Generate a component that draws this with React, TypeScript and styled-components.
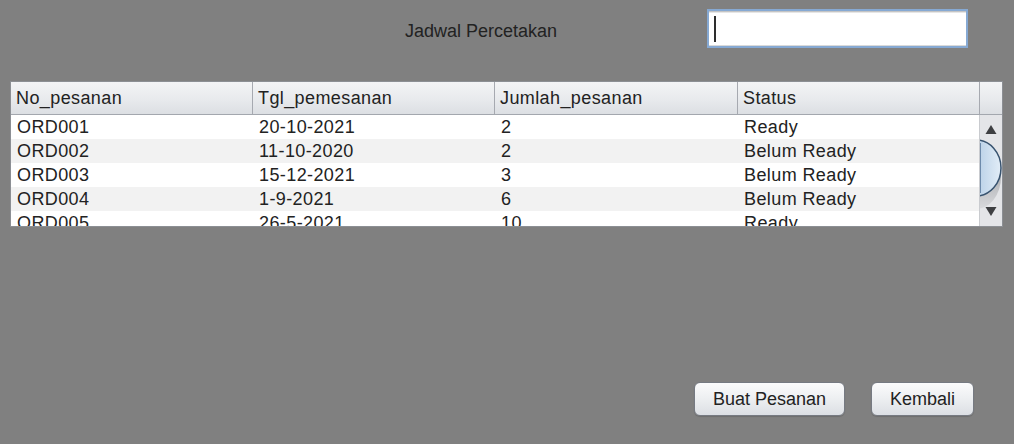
import React from "react";
import styled, { createGlobalStyle } from "styled-components";

const Global = createGlobalStyle`
  html, body { margin: 0; padding: 0; background: #808080; }
  * { box-sizing: border-box; }
`;

const Page = styled.div`
  width: 1014px;
  height: 444px;
  background: #808080;
  font-family: "Liberation Sans", Arial, sans-serif;
  color: #222;
  display: flex;
  flex-direction: column;
  overflow: hidden;
`;

const TopBar = styled.div`
  display: flex;
  align-items: flex-start;
  padding: 9px 46px 0 405px;
  height: 57px;
`;

const Title = styled.div`
  font-size: 18px;
  line-height: 24px;
  margin-top: 10px;
  color: #222;
`;

const SearchField = styled.div`
  margin-left: auto;
  width: 261px;
  height: 39px;
  background: #fff;
  border: 2px solid #86a9d3;
  box-shadow: inset 0 1px 0 #c4c4c4, inset 0 2px 0 #e6e6e6, inset 0 -1px 0 #dadada;
  display: flex;
  align-items: center;
  padding-left: 5px;
`;

const Caret = styled.span`
  width: 2px;
  height: 26px;
  background: #2e2e2e;
`;

const TableBox = styled.div`
  margin: 24px 11px 0 10px;
  height: 146px;
  border: 1px solid #8c8f94;
  background: #fff;
  display: flex;
  flex-direction: column;
`;

const cols = "242px 242px 243px 242px 1fr";

const HeaderRow = styled.div`
  display: grid;
  grid-template-columns: ${cols};
  height: 33px;
  border-bottom: 1px solid #a3a7ae;
  background: linear-gradient(#f3f4f6 0%, #e8eaed 55%, #dcdfe3 100%);
`;

const HeaderCell = styled.div<{ $last?: boolean }>`
  font-size: 18px;
  letter-spacing: 0.4px;
  line-height: 32px;
  padding-left: 5px;
  border-right: ${(p) => (p.$last ? "none" : "1px solid #a6a9b0")};
  color: #222;
  white-space: nowrap;
  overflow: hidden;
`;

const Body = styled.div`
  flex: 1;
  display: grid;
  grid-template-columns: 1fr 23px;
  overflow: hidden;
`;

const Rows = styled.div`
  overflow: hidden;
`;

const Row = styled.div<{ $alt: boolean }>`
  display: grid;
  grid-template-columns: 242px 242px 243px 242px;
  height: 24px;
  background: ${(p) => (p.$alt ? "#f2f2f2" : "#ffffff")};
`;

const Cell = styled.div`
  font-size: 18px;
  letter-spacing: 0.4px;
  line-height: 24px;
  padding-left: 6px;
  color: #222;
  white-space: nowrap;
`;

const ScrollTrack = styled.div`
  background: #e4e5e8;
  border-left: 1px solid #c9cbcf;
  overflow: hidden;
`;

const ScrollSvg = styled.svg`
  display: block;
`;

const ButtonRow = styled.div`
  display: flex;
  justify-content: flex-end;
  gap: 26px;
  padding-right: 40px;
  margin-top: 155px;
`;

const Button = styled.button<{ $w: number }>`
  width: ${(p) => p.$w}px;
  height: 34px;
  border: 1px solid #767a82;
  border-radius: 6px;
  background: linear-gradient(#fbfbfc 0%, #eef0f2 45%, #dcdfe4 100%);
  box-shadow: 0 1px 1px rgba(0, 0, 0, 0.15);
  font-family: "Liberation Sans", Arial, sans-serif;
  font-size: 18px;
  color: #222;
  padding: 0;
  line-height: 32px;
`;

const data = [
  ["ORD001", "20-10-2021", "2", "Ready"],
  ["ORD002", "11-10-2020", "2", "Belum Ready"],
  ["ORD003", "15-12-2021", "3", "Belum Ready"],
  ["ORD004", "1-9-2021", "6", "Belum Ready"],
  ["ORD005", "26-5-2021", "10", "Ready"],
];

const headers = ["No_pesanan", "Tgl_pemesanan", "Jumlah_pesanan", "Status"];

function Scrollbar() {
  return (
    <ScrollSvg width="22" height="111" viewBox="0 0 22 111">
      <defs>
        <linearGradient id="thumb" x1="0" y1="0" x2="1" y2="0">
          <stop offset="0" stopColor="#c9dcee" />
          <stop offset="0.5" stopColor="#b7cfe6" />
          <stop offset="1" stopColor="#e2edf7" />
        </linearGradient>
        <linearGradient id="shade" x1="0" y1="0" x2="0" y2="1">
          <stop offset="0" stopColor="#8a8c90" />
          <stop offset="1" stopColor="#d9dadd" />
        </linearGradient>
      </defs>
      <polygon points="5.5,19 16.5,19 11,10" fill="#3e3f42" />
      <ellipse cx="-4" cy="62" rx="25" ry="32" fill="url(#shade)" />
      <ellipse cx="-4" cy="53" rx="25" ry="28" fill="url(#thumb)" stroke="#38536f" strokeWidth="1.5" />
      <line x1="0.5" y1="28" x2="0.5" y2="78" stroke="#6e8bab" strokeWidth="1" />
      <polygon points="5.5,92 16.5,92 11,101" fill="#3e3f42" />
    </ScrollSvg>
  );
}

export default function App() {
  return (
    <>
      <Global />
      <Page>
        <TopBar>
          <Title>Jadwal Percetakan</Title>
          <SearchField>
            <Caret />
          </SearchField>
        </TopBar>
        <TableBox>
          <HeaderRow>
            {headers.map((h) => (
              <HeaderCell key={h}>{h}</HeaderCell>
            ))}
            <HeaderCell $last />
          </HeaderRow>
          <Body>
            <Rows>
              {data.map((r, i) => (
                <Row key={r[0]} $alt={i % 2 === 1}>
                  {r.map((c, j) => (
                    <Cell key={j}>{c}</Cell>
                  ))}
                </Row>
              ))}
            </Rows>
            <ScrollTrack>
              <Scrollbar />
            </ScrollTrack>
          </Body>
        </TableBox>
        <ButtonRow>
          <Button $w={151}>Buat Pesanan</Button>
          <Button $w={103}>Kembali</Button>
        </ButtonRow>
      </Page>
    </>
  );
}
